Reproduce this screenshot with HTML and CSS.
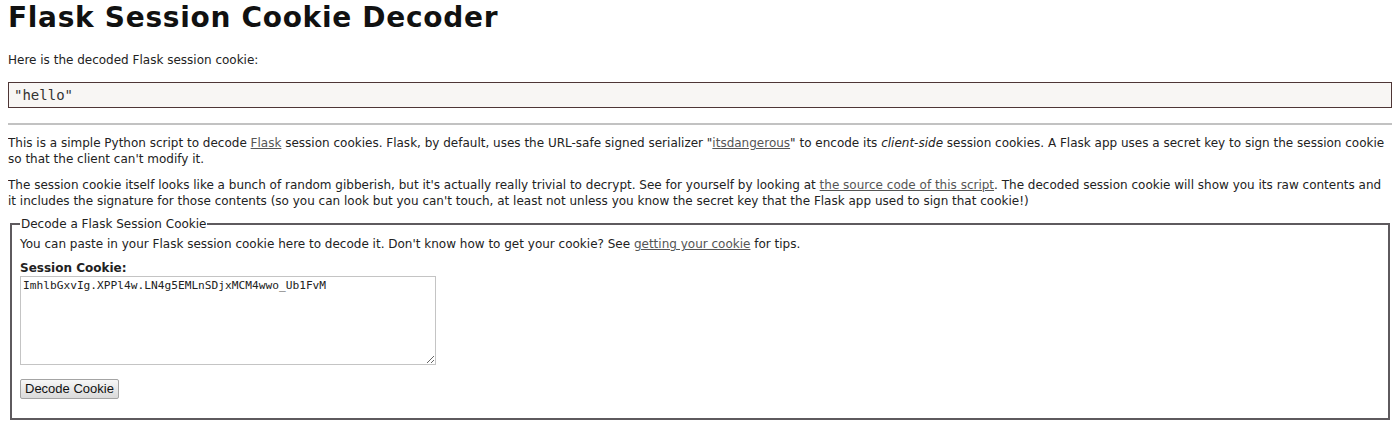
FILE: index.html
```html
<!DOCTYPE html>
<html>
<head>
<meta charset="utf-8">
<title>Flask Session Cookie Decoder</title>
<link rel="stylesheet" href="styles.css">
</head>
<body>
<h1 class="title">Flask Session Cookie Decoder</h1>
<p class="intro">Here is the decoded Flask session cookie:</p>
<pre class="output">"hello"</pre>
<hr class="rule">
<p class="text">This is a simple Python script to decode <a href="#">Flask</a> session cookies. Flask, by default, uses the URL-safe signed serializer "<a href="#">itsdangerous</a>" to encode its <em>client-side</em> session cookies. A Flask app uses a secret key to sign the session cookie so that the client can't modify it.</p>
<p class="text">The session cookie itself looks like a bunch of random gibberish, but it's actually really trivial to decrypt. See for yourself by looking at <a href="#">the source code of this script</a>. The decoded session cookie will show you its raw contents and it includes the signature for those contents (so you can look but you can't touch, at least not unless you know the secret key that the Flask app used to sign that cookie!)</p>
<form class="form">
<fieldset class="box">
<legend class="legend">Decode a Flask Session Cookie</legend>
<p class="hint">You can paste in your Flask session cookie here to decode it. Don't know how to get your cookie? See <a href="#">getting your cookie</a> for tips.</p>
<label class="label" for="c">Session Cookie:</label>
<textarea class="cookie" id="c">ImhlbGxvIg.XPPl4w.LN4g5EMLnSDjxMCM4wwo_Ub1FvM</textarea>
<div class="actions"><button type="button" class="btn">Decode Cookie</button></div>
</fieldset>
</form>
</body>
</html>
```
FILE: styles.css
```css
html, body { background: #fff; }
body {
  margin: 0 8px 8px;
  font-family: "DejaVu Sans", Verdana, sans-serif;
  font-size: 12px;
  line-height: 16px;
  color: #222;
}
.title {
  font-size: 28px;
  line-height: 30px;
  letter-spacing: 0.7px;
  font-weight: bold;
  margin: 3px 0 19px;
  color: #111;
}
.intro { margin: 0 0 14px; }
.output {
  margin: 0;
  border: 1px solid #4e3636;
  background: #f8f6f4;
  font-family: "DejaVu Sans Mono", monospace;
  font-size: 14px;
  line-height: 24px;
  padding: 0 5px;
  color: #333;
}
.rule {
  border: 0;
  border-top: 2px solid #c2c2c2;
  margin: 15px 0 0;
}
.text { margin: 10px 0 0; }
a { color: #555; }
.form { margin: 7px 0 0; }
.box {
  border: 2px solid #5e5a5e;
  margin: 0 2px;
  padding: 0 8px 19px;
}
.legend { padding: 0 1px; }
.hint { margin: 4px 0 0; }
.label { display: block; font-weight: bold; margin-top: 8px; }
.cookie {
  display: block;
  width: 416px;
  height: 89px;
  box-sizing: border-box;
  border: 1px solid #c4c4c4;
  font-family: "DejaVu Sans Mono", monospace;
  font-size: 11.2px;
  line-height: 14px;
  padding: 2px;
  margin: 0;
  color: #222;
}
.actions { margin-top: 14px; }
.btn {
  display: block;
  height: 20px;
  font-family: "Liberation Sans", Arial, sans-serif;
  font-size: 13px;
  line-height: 16px;
  padding: 1px 4px;
  border: 1px solid #a4a4a4;
  background: linear-gradient(#f7f7f7, #dadada);
  color: #111;
  border-radius: 2px;
}
```
